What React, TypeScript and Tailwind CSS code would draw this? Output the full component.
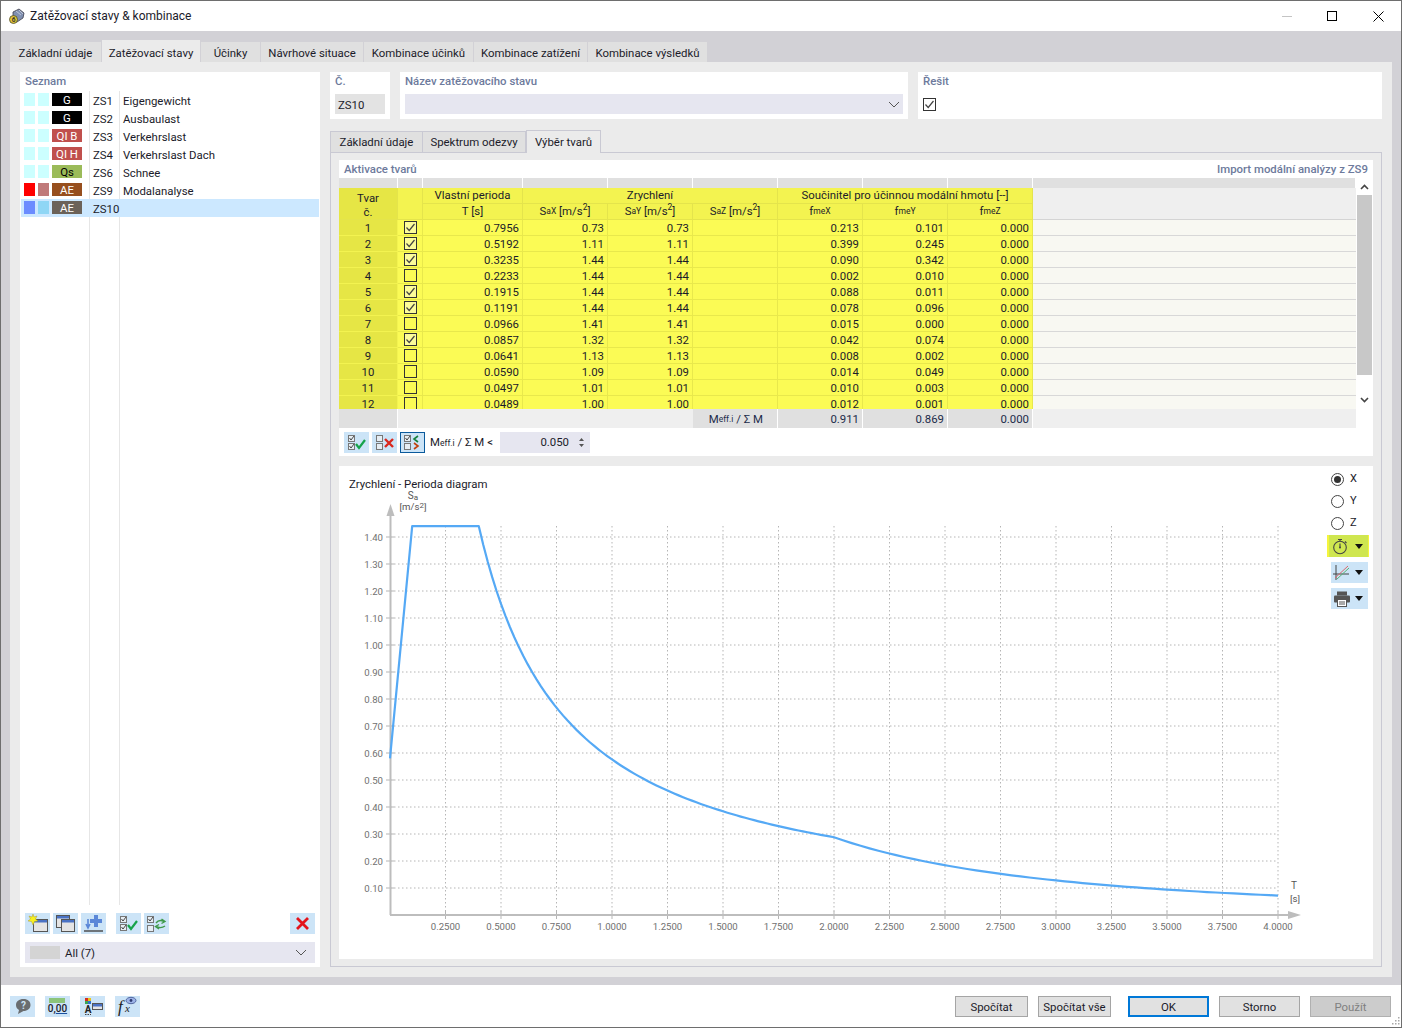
import { ReactNode } from "react";

const loadCases = [
  { a: "bg-[#ccffff]", b: "bg-[#ccffff]", tag: "G", tagCls: "bg-black text-white", no: "ZS1", name: "Eigengewicht" },
  { a: "bg-[#ccffff]", b: "bg-[#ccffff]", tag: "G", tagCls: "bg-black text-white", no: "ZS2", name: "Ausbaulast" },
  { a: "bg-[#ccffff]", b: "bg-[#ccffff]", tag: "QI B", tagCls: "bg-[#c0504d] text-white", no: "ZS3", name: "Verkehrslast" },
  { a: "bg-[#ccffff]", b: "bg-[#ccffff]", tag: "QI H", tagCls: "bg-[#c0504d] text-white", no: "ZS4", name: "Verkehrslast Dach" },
  { a: "bg-[#ccffff]", b: "bg-[#ccffff]", tag: "Qs", tagCls: "bg-[#9bbb59] text-black", no: "ZS6", name: "Schnee" },
  { a: "bg-[#ff0000]", b: "bg-[#c07a7a]", tag: "AE", tagCls: "bg-[#974f1e] text-white", no: "ZS9", name: "Modalanalyse" },
  { a: "bg-[#6b8cff]", b: "bg-[#8fd6f5]", tag: "AE", tagCls: "bg-[#6b6259] text-white", no: "ZS10", name: "" },
];

const rows = [
  [1, true, "0.7956", "0.73", "0.73", "0.213", "0.101", "0.000"],
  [2, true, "0.5192", "1.11", "1.11", "0.399", "0.245", "0.000"],
  [3, true, "0.3235", "1.44", "1.44", "0.090", "0.342", "0.000"],
  [4, false, "0.2233", "1.44", "1.44", "0.002", "0.010", "0.000"],
  [5, true, "0.1915", "1.44", "1.44", "0.088", "0.011", "0.000"],
  [6, true, "0.1191", "1.44", "1.44", "0.078", "0.096", "0.000"],
  [7, false, "0.0966", "1.41", "1.41", "0.015", "0.000", "0.000"],
  [8, true, "0.0857", "1.32", "1.32", "0.042", "0.074", "0.000"],
  [9, false, "0.0641", "1.13", "1.13", "0.008", "0.002", "0.000"],
  [10, false, "0.0590", "1.09", "1.09", "0.014", "0.049", "0.000"],
  [11, false, "0.0497", "1.01", "1.01", "0.010", "0.003", "0.000"],
  [12, false, "0.0489", "1.00", "1.00", "0.012", "0.001", "0.000"],
] as const;

const cols = "grid grid-cols-[59px_25px_100px_85px_85px_85px_85px_85px_85px_323px]";
const labelCls = "text-[11.4px] font-medium text-[#6d7a9c]";
const hBase = "flex items-center justify-center border-r border-b border-[#e4e44c]";
const hCell = `${hBase} bg-[#f3f350] pb-px`;
const dBase = "flex items-center border-r border-b border-[#e8e84c] bg-[#fbfb55]";
const dCell = `${dBase} justify-end pr-[3px]`;
const fCell = "flex items-center justify-end border-r border-white bg-[#e0e0e0] text-[#1c2b4a]";

const Check = ({ on, cls = "" }: { on: boolean; cls?: string }) => (
  <svg width="13" height="13" viewBox="0 0 13 13" className={cls}>
    <rect x="0.5" y="0.5" width="12" height="12" fill="#fff" fillOpacity={on ? 0.4 : 0} stroke="#333" />
    {on && <path d="M2.5 6.5 L5.2 9.5 L10.5 3" fill="none" stroke="#444" strokeWidth="1.2" />}
  </svg>
);

const Chevron = () => (
  <svg width="12" height="7" viewBox="0 0 12 7">
    <path d="M1 1 L6 6 L11 1" fill="none" stroke="#555" strokeWidth="1" />
  </svg>
);

const IconBtn = ({ children, cls = "" }: { children: ReactNode; cls?: string }) => (
  <div className={`flex h-[21px] w-[25px] items-center justify-center bg-[#cce4f7] ${cls}`}>{children}</div>
);

const MiniBox = ({ x, y, on }: { x: number; y: number; on?: boolean }) => (
  <g>
    <rect x={x + 0.5} y={y + 0.5} width="6" height="6" fill="#e6edf3" stroke="#777" />
    {on && <path d={`M${x + 1.5} ${y + 3} l1.5 2 l3 -4`} fill="none" stroke="#333" strokeWidth="0.9" />}
  </g>
);

const IconCheckAll = () => (
  <svg width="20" height="17" viewBox="0 0 20 17">
    <MiniBox x={1} y={1} on />
    <MiniBox x={1} y={9} on />
    <path d="M9 10 L12 14 L18 6" fill="none" stroke="#16a34a" strokeWidth="2.2" />
  </svg>
);
const IconUncheckAll = () => (
  <svg width="20" height="17" viewBox="0 0 20 17">
    <MiniBox x={1} y={1} />
    <MiniBox x={1} y={9} />
    <path d="M10 5 L18 13 M18 5 L10 13" stroke="#d9281e" strokeWidth="2.4" />
  </svg>
);
const IconInvert = () => (
  <svg width="20" height="17" viewBox="0 0 20 17">
    <MiniBox x={1} y={1} on />
    <MiniBox x={1} y={9} />
    <path d="M15 2 L11 5 L15 8" fill="none" stroke="#16803c" strokeWidth="1.6" />
    <path d="M11 9 L15 12 L11 15" fill="none" stroke="#c2410c" strokeWidth="1.6" />
  </svg>
);
const IconSwap = () => (
  <svg width="21" height="18" viewBox="0 0 21 18">
    <MiniBox x={1} y={1} on />
    <MiniBox x={1} y={10} />
    <path d="M10 8 Q13 4 18 6.5 M15.5 4 L19 6.5 L15.5 8.5 M19 11 Q15 14 10 11.5 M13 9.5 L9.5 11.5 L13 14" fill="none" stroke="#3f9a4a" strokeWidth="1.4" />
  </svg>
);
const WinBox = ({ x, y, w = 14, h = 12 }: { x: number; y: number; w?: number; h?: number }) => (
  <g>
    <rect x={x + 0.5} y={y + 0.5} width={w} height={h} fill="#e4e4e4" stroke="#555" />
    <rect x={x + 1} y={y + 1} width={w - 1} height="2.5" fill="#4a72c4" />
  </g>
);

const Tab = ({ label, w, active }: { label: string; w: string; active?: boolean }) => (
  <div
    className={`flex items-center justify-center border-r border-[#d2d1d6] ${w} ${
      active ? "h-[22px] bg-[#ebebeb] pt-[3px]" : "h-[20px] bg-[#e0e0e0] pt-px"
    }`}
  >
    {label}
  </div>
);

const Btn = ({ label, w = "w-[73px]", cls = "" }: { label: string; w?: string; cls?: string }) => (
  <div className={`flex h-[21px] items-center justify-center border pt-px ${w} ${cls}`}>{label}</div>
);

const Sub = ({ children }: { children: ReactNode }) => <span className="text-[8.5px]">{children}</span>;

const xOf = (t: number) => 390 + t * 222;
const yOf = (s: number) => 915 - s * 270;

const curve = () => {
  const pts: string[] = [`${xOf(0)},${yOf(0.58)}`, `${xOf(0.1)},${yOf(1.44)}`, `${xOf(0.4)},${yOf(1.44)}`];
  for (let t = 0.42; t <= 2; t += 0.02) pts.push(`${xOf(t)},${yOf(0.576 / t)}`);
  for (let t = 2; t <= 4.001; t += 0.04) pts.push(`${xOf(t)},${yOf(1.152 / (t * t))}`);
  return pts.join(" ");
};

const Chart = () => {
  const xTicks = Array.from({ length: 16 }, (_, i) => (i + 1) * 0.25);
  const yTicks = Array.from({ length: 14 }, (_, i) => (i + 1) * 0.1);
  return (
    <svg width="985" height="469" viewBox="339 490 985 469" className="block tracking-normal">
      {xTicks.map((t) => (
        <g key={t}>
          <line x1={xOf(t)} x2={xOf(t)} y1="526" y2="915" stroke="#b5b5b5" strokeDasharray="1.5 2.5" />
          <line x1={xOf(t)} x2={xOf(t)} y1="911" y2="919" stroke="#b5b5b5" />
          <text x={xOf(t)} y="930" fontSize="9.6" fill="#707070" textAnchor="middle">
            {t.toFixed(4)}
          </text>
        </g>
      ))}
      {yTicks.map((s) => (
        <g key={s}>
          <line x1="390" x2="1278" y1={yOf(s)} y2={yOf(s)} stroke="#b5b5b5" strokeDasharray="1.5 2.5" />
          <line x1="386" x2="394" y1={yOf(s)} y2={yOf(s)} stroke="#b5b5b5" />
          <text x="383" y={yOf(s) + 3.5} fontSize="9.6" fill="#707070" textAnchor="end">
            {s.toFixed(2)}
          </text>
        </g>
      ))}
      <line x1="390.5" x2="390.5" y1="512" y2="915" stroke="#bdbdbd" strokeWidth="2" />
      <line x1="390" x2="1292" y1="915" y2="915" stroke="#bdbdbd" strokeWidth="2" />
      <path d="M390.5 504 L394.5 516 L386.5 516 Z" fill="#bdbdbd" />
      <path d="M1301 915 L1288 911 L1288 919 Z" fill="#bdbdbd" />
      <polyline points={curve()} fill="none" stroke="#55a9f5" strokeWidth="2.2" strokeLinejoin="round" />
      <text x="413" y="499" fontSize="10" fill="#555" textAnchor="middle">
        S<tspan fontSize="8" dy="1">a</tspan>
      </text>
      <text x="413" y="510" fontSize="9.6" fill="#555" textAnchor="middle">
        [m/s<tspan fontSize="8" dy="-2">2</tspan>
        <tspan dy="2">]</tspan>
      </text>
      <text x="1294" y="889" fontSize="10" fill="#555" textAnchor="middle">T</text>
      <text x="1295" y="902" fontSize="9.6" fill="#555" textAnchor="middle">[s]</text>
    </svg>
  );
};

const Radio = ({ label, on }: { label: string; on?: boolean }) => (
  <div className="flex h-[22px] items-center gap-[6px] pl-[4px]">
    <div className="flex h-[13px] w-[13px] items-center justify-center rounded-full border border-[#444] bg-white">
      {on && <div className="h-[7px] w-[7px] rounded-full bg-[#333]" />}
    </div>
    <span className="text-[11px]">{label}</span>
  </div>
);

const Caret = () => (
  <svg width="8" height="5" viewBox="0 0 8 5">
    <path d="M0 0 L8 0 L4 5 Z" fill="#111" />
  </svg>
);

export default function App() {
  return (
    <div className="flex h-[1028px] w-[1402px] flex-col border border-[#6e6e6e] bg-white text-[11.4px] leading-[16px] text-[#1b1b2a] [font-family:Roboto,sans-serif]">
      {/* title bar */}
      <div className="flex h-[30px] shrink-0 items-center pl-[7px]">
        <svg width="17" height="17" viewBox="0 0 17 17">
          <path d="M5 4 L11 1 L16 5 L15 10 L9 14 L5 11 Z" fill="#7f8fb0" stroke="#3c3c4a" strokeWidth="0.8" />
          <path d="M8 3 L13 7 M11 2 L15 6" stroke="#c4cbdc" strokeWidth="0.9" />
          <circle cx="5.5" cy="11.5" r="4" fill="#e3c534" stroke="#4a4a30" strokeWidth="0.8" />
          <text x="5.5" y="14" fontSize="6.5" fontWeight="700" fill="#333" textAnchor="middle">6</text>
        </svg>
        <span className="ml-[5px] text-[12px]">Zatěžovací stavy &amp; kombinace</span>
        <div className="ml-auto flex items-center">
          <div className="mr-[35px] h-px w-[10px] bg-[#c4c4c4]" />
          <div className="mr-[36px] h-[10px] w-[10px] border border-black" />
          <svg width="11" height="11" viewBox="0 0 11 11" className="mr-[17px]">
            <path d="M0.5 0.5 L10.5 10.5 M10.5 0.5 L0.5 10.5" stroke="#000" />
          </svg>
        </div>
      </div>

      {/* dialog body */}
      <div className="flex h-[954px] shrink-0 flex-col bg-[#d2d1d6] pl-[9px] pt-[9px]">
        <div className="flex h-[22px] items-end">
          <Tab label="Základní údaje" w="w-[92px]" />
          <Tab label="Zatěžovací stavy" w="w-[99px]" active />
          <Tab label="Účinky" w="w-[60px]" />
          <Tab label="Návrhové situace" w="w-[103px]" />
          <Tab label="Kombinace účinků" w="w-[110px]" />
          <Tab label="Kombinace zatížení" w="w-[114px]" />
          <Tab label="Kombinace výsledků" w="w-[120px]" />
        </div>
        <div className="flex h-[915px] w-[1382px] gap-[10px] bg-[#ebebeb] p-[10px]">
          {/* list */}
          <div className="flex h-[895px] w-[300px] shrink-0 flex-col bg-white">
            <div className={`h-[19px] pl-[5px] pt-[1px] ${labelCls}`}>Seznam</div>
            <div className="relative flex h-[822px] flex-col pl-px pr-px">
              <div className="absolute bottom-[8px] left-[69px] top-0 w-px bg-[#e6e6e6]" />
              <div className="absolute bottom-[8px] left-[99px] top-0 w-px bg-[#e6e6e6]" />
              {loadCases.map((c) => (
                <div
                  key={c.no}
                  className={`relative flex h-[18px] items-start pl-[3px] pt-[2px] ${c.no === "ZS10" ? "bg-[#cce8ff]" : ""}`}
                >
                  <div className={`h-[13px] w-[11px] ${c.a}`} />
                  <div className={`ml-[3px] h-[13px] w-[11px] ${c.b}`} />
                  <div className={`ml-[3px] flex h-[13px] w-[30px] items-center justify-center ${c.tagCls}`}>
                    {c.tag}
                  </div>
                  <span className="ml-[11px] w-[30px]">{c.no}</span>
                  <span>{c.name}</span>
                </div>
              ))}
            </div>
            <div className="flex items-center pl-[5px] pr-[5px]">
              <IconBtn>
                <svg width="22" height="19" viewBox="0 0 22 19">
                  <WinBox x={6} y={5} w={14} h={12} />
                  <path d="M6 0 L7 3 L10 2 L8.5 5 L11 7 L7.5 7.5 L6 11 L4.5 7.5 L1 7 L3.5 5 L2 2 L5 3 Z" fill="#f7f020" stroke="#a08a20" strokeWidth="0.4" />
                </svg>
              </IconBtn>
              <IconBtn cls="ml-[3px]">
                <svg width="21" height="19" viewBox="0 0 21 19">
                  <WinBox x={1} y={1} w={13} h={12} />
                  <WinBox x={6} y={5} w={13} h={12} />
                </svg>
              </IconBtn>
              <IconBtn cls="ml-[3px]">
                <svg width="21" height="19" viewBox="0 0 21 19">
                  <path d="M11 1 H15 V5 H19 V9 H15 V13 H11 V9 H7 V5 H11 Z" fill="#5b87d8" />
                  <path d="M5 5 V13 M3 10 L5 14 L7 10" fill="none" stroke="#5b87d8" strokeWidth="1.6" />
                  <line x1="1" x2="20" y1="17" y2="17" stroke="#444" strokeWidth="1.4" />
                </svg>
              </IconBtn>
              <IconBtn cls="ml-[10px]">
                <IconCheckAll />
              </IconBtn>
              <IconBtn cls="ml-[3px]">
                <IconSwap />
              </IconBtn>
              <IconBtn cls="ml-auto">
                <svg width="13" height="13" viewBox="0 0 13 13">
                  <path d="M1 1 L12 12 M12 1 L1 12" stroke="#e3141c" strokeWidth="2.8" />
                </svg>
              </IconBtn>
            </div>
            <div className="mx-[5px] mt-[8px] flex h-[21px] items-center bg-[#e6e6f0] pl-[5px] pr-[8px]">
              <div className="h-[13px] w-[30px] bg-[#d4d4d4]" />
              <span className="ml-[5px] pt-px">All (7)</span>
              <div className="ml-auto">
                <Chevron />
              </div>
            </div>
          </div>

          {/* detail */}
          <div className="flex w-[1052px] flex-col">
            <div className="flex h-[47px] gap-[10px]">
              <div className="flex w-[60px] flex-col bg-white px-[5px]">
                <div className={`h-[22px] pt-[1px] ${labelCls}`}>Č.</div>
                <div className="flex h-[20px] items-center bg-[#e3e3e3] pl-[3px] pt-[2px]">ZS10</div>
              </div>
              <div className="flex w-[508px] flex-col bg-white px-[5px]">
                <div className={`h-[22px] pt-[1px] ${labelCls}`}>Název zatěžovacího stavu</div>
                <div className="flex h-[20px] items-center justify-end bg-[#e6e6f0] pr-[3px]">
                  <Chevron />
                </div>
              </div>
              <div className="flex w-[464px] flex-col bg-white px-[5px]">
                <div className={`h-[26px] pt-[1px] ${labelCls}`}>Řešit</div>
                <Check on />
              </div>
            </div>

            <div className="mt-[11px] flex h-[22px] items-end">
              <div className="flex h-[21px] w-[93px] items-center justify-center border border-b-0 border-[#c9c9d3] bg-[#e0e0e0]">
                Základní údaje
              </div>
              <div className="flex h-[21px] w-[103px] items-center justify-center border-r border-t border-[#c9c9d3] bg-[#e0e0e0]">
                Spektrum odezvy
              </div>
              <div className="z-10 -mb-px flex h-[23px] w-[75px] items-center justify-center border border-b-0 border-[#c9c9d3] bg-[#ebebeb]">
                Výběr tvarů
              </div>
            </div>

            <div className="flex h-[815px] flex-col border border-[#c9c9d3] px-[8px] pt-[7px]">
              {/* shapes table */}
              <div className="flex h-[296px] flex-col bg-white">
                <div className={`flex h-[18px] items-center justify-between pl-[5px] pr-[5px] ${labelCls}`}>
                  <span>Aktivace tvarů</span>
                  <span>Import modální analýzy z ZS9</span>
                </div>
                <div className="flex h-[231px]">
                  <div className="h-[231px] w-[1017px] overflow-hidden">
                    <div className={`${cols} h-[10px]`}>
                      {Array.from({ length: 10 }).map((_, i) => (
                        <div key={i} className="border-r border-white bg-[#e0e0e0]" />
                      ))}
                    </div>
                    <div className={`${cols} grid-rows-[16px_16px]`}>
                      <div className={`${hBase} row-span-2 flex-col bg-[#e6e645] pt-[3px] leading-[14px]`}>
                        <span>Tvar</span>
                        <span>č.</span>
                      </div>
                      <div className={`${hCell} row-span-2`} />
                      <div className={hCell}>Vlastní perioda</div>
                      <div className={`${hCell} col-span-3`}>Zrychlení</div>
                      <div className={`${hCell} col-span-3`}>Součinitel pro účinnou modální hmotu [--]</div>
                      <div className="row-span-2 border-b border-[#d4d4d4] bg-[#efefef]" />
                      <div className={hCell}>T [s]</div>
                      <div className={hCell}>S<Sub>aX</Sub>&nbsp;[m/s<sup className="text-[8.5px]">2</sup>]</div>
                      <div className={hCell}>S<Sub>aY</Sub>&nbsp;[m/s<sup className="text-[8.5px]">2</sup>]</div>
                      <div className={hCell}>S<Sub>aZ</Sub>&nbsp;[m/s<sup className="text-[8.5px]">2</sup>]</div>
                      <div className={hCell}>f<Sub>meX</Sub></div>
                      <div className={hCell}>f<Sub>meY</Sub></div>
                      <div className={hCell}>f<Sub>meZ</Sub></div>
                    </div>
                    {rows.map((r) => (
                      <div key={r[0]} className={`${cols} grid-rows-[16px]`}>
                        <div className="flex items-center justify-center border-r border-b border-[#f3f350] bg-[#e6e645]">
                          {r[0]}
                        </div>
                        <div className={`${dBase} justify-center`}>
                          <Check on={r[1]} />
                        </div>
                        <div className={dCell}>{r[2]}</div>
                        <div className={dCell}>{r[3]}</div>
                        <div className={dCell}>{r[4]}</div>
                        <div className={dCell} />
                        <div className={dCell}>{r[5]}</div>
                        <div className={dCell}>{r[6]}</div>
                        <div className={dCell}>{r[7]}</div>
                        <div className="border-b border-[#d8d8d8] bg-[#f8f8f2]" />
                      </div>
                    ))}
                  </div>
                  <div className="flex w-[17px] flex-col items-center bg-white pt-[6px]">
                    <svg width="9" height="6" viewBox="0 0 9 6">
                      <path d="M1 5 L4.5 1.5 L8 5" fill="none" stroke="#444" strokeWidth="1.6" />
                    </svg>
                    <div className="mt-[5px] h-[180px] w-[15px] bg-[#c8c8c8]" />
                    <svg width="9" height="6" viewBox="0 0 9 6" className="mt-[22px]">
                      <path d="M1 1 L4.5 4.5 L8 1" fill="none" stroke="#444" strokeWidth="1.6" />
                    </svg>
                  </div>
                </div>
                <div className={`${cols} h-[19px]`}>
                  <div className="border-r border-white bg-[#e0e0e0]" />
                  <div className="col-span-4 bg-[#efefef]" />
                  <div className={`${fCell} pr-[14px]`}>
                    M<Sub>eff.i</Sub>&nbsp;/ Σ M
                  </div>
                  <div className={`${fCell} pr-[3px]`}>0.911</div>
                  <div className={`${fCell} pr-[3px]`}>0.869</div>
                  <div className={`${fCell} pr-[3px]`}>0.000</div>
                  <div className="bg-[#efefef]" />
                </div>
                <div className="flex h-[28px] items-center pl-[5px]">
                  <IconBtn>
                    <IconCheckAll />
                  </IconBtn>
                  <IconBtn cls="ml-[3px]">
                    <IconUncheckAll />
                  </IconBtn>
                  <IconBtn cls="ml-[3px] border border-[#0a5a9c]">
                    <IconInvert />
                  </IconBtn>
                  <span className="ml-[5px] w-[70px]">
                    M<Sub>eff.i</Sub>&nbsp;/ Σ M &lt;
                  </span>
                  <div className="flex h-[21px] w-[90px] items-center justify-end bg-[#e6e6f0] pr-[5px]">
                    0.050
                    <svg width="7" height="11" viewBox="0 0 7 11" className="ml-[9px]">
                      <path d="M3.5 1 L6 4 L1 4 Z M3.5 10 L6 7 L1 7 Z" fill="#555" />
                    </svg>
                  </div>
                </div>
              </div>

              {/* diagram */}
              <div className="mt-[10px] flex h-[493px] bg-white">
                <div className="flex w-[985px] flex-col">
                  <div className="h-[24px] pl-[10px] pt-[12px] leading-[12px]">Zrychlení - Perioda diagram</div>
                  <Chart />
                </div>
                <div className="flex flex-1 flex-col pl-[3px] pt-[2px]">
                  <Radio label="X" on />
                  <Radio label="Y" />
                  <Radio label="Z" />
                  <div className="mt-px flex h-[22px] w-[42px] items-center justify-between border-l-2 border-r border-[#f5f53c] bg-[#cfe650] pl-[3px] pr-[5px]">
                    <svg width="16" height="17" viewBox="0 0 16 17">
                      <circle cx="8" cy="9.5" r="6.3" fill="none" stroke="#444" strokeWidth="1.1" />
                      <path d="M6 1.5 H10 M8 1.5 V3.2 M8 9.5 V5.5 M13 3.5 L14.5 5" fill="none" stroke="#444" strokeWidth="1.1" />
                      <circle cx="8" cy="9.5" r="1" fill="#444" />
                    </svg>
                    <Caret />
                  </div>
                  <div className="ml-[4px] mt-[5px] flex h-[21px] w-[37px] items-center justify-between bg-[#cce4f7] pl-[2px] pr-[5px]">
                    <svg width="17" height="17" viewBox="0 0 17 17">
                      <path d="M3 1 V16 M0 10 H16" stroke="#444" strokeWidth="1" />
                      <path d="M2 14 L15 2" stroke="#d96a6a" strokeWidth="1" />
                      <path d="M4 15 L16 4" stroke="#5bb275" strokeWidth="1" />
                    </svg>
                    <Caret />
                  </div>
                  <div className="ml-[4px] mt-[5px] flex h-[21px] w-[37px] items-center justify-between bg-[#cce4f7] pl-[2px] pr-[5px]">
                    <svg width="17" height="16" viewBox="0 0 17 16">
                      <rect x="4" y="0.5" width="10" height="4" fill="#555" />
                      <rect x="1" y="4.5" width="16" height="7" rx="1" fill="#555" />
                      <rect x="4.5" y="8.5" width="9" height="7" fill="#fff" stroke="#555" />
                      <path d="M6 11 H12 M6 13 H12" stroke="#555" />
                    </svg>
                    <Caret />
                  </div>
                </div>
              </div>
            </div>
          </div>
        </div>
      </div>

      {/* footer */}
      <div className="relative flex flex-1 items-center pl-[9px]">
        <IconBtn>
          <svg width="18" height="17" viewBox="0 0 18 17">
            <path d="M9.5 1 C14 1 16.5 3.5 16.5 7 C16.5 10.5 13.5 13 9.5 13 L4 16 L5 12 C3 11 2 9.2 2 7 C2 3.5 5 1 9.5 1 Z" fill="#6a6d70" />
            <text x="9.5" y="11" fontSize="10" fontWeight="700" fill="#cce4f7" textAnchor="middle">?</text>
          </svg>
        </IconBtn>
        <IconBtn cls="ml-[10px]">
          <div className="flex flex-col items-center leading-none">
            <div className="mb-[1px] h-[5px] w-[16px] bg-[#8cc47a]" />
            <span className="text-[10px] font-medium leading-[10px]">
              0,<span className="underline decoration-[#1a4fa0]">00</span>
            </span>
          </div>
        </IconBtn>
        <IconBtn cls="ml-[10px]">
          <svg width="21" height="19" viewBox="0 0 21 19">
            <rect x="3" y="1" width="3" height="3" fill="#d62d20" />
            <rect x="6" y="1" width="3" height="3" fill="#e7c51c" />
            <rect x="3" y="4" width="3" height="3" fill="#3aa655" />
            <rect x="6" y="4" width="3" height="3" fill="#2f6fd0" />
            <WinBox x={10} y={6} w={10} h={6} />
            <text x="6" y="15.5" fontSize="10" fontWeight="700" fill="#222" textAnchor="middle">A</text>
            <path d="M3 17.5 H9" stroke="#444" strokeDasharray="1.5 1" />
          </svg>
        </IconBtn>
        <IconBtn cls="ml-[10px]">
          <svg width="21" height="20" viewBox="0 0 21 20">
            <text x="1" y="16" fontSize="17" fontStyle="italic" fontFamily="Liberation Serif" fill="#222">f</text>
            <text x="8" y="16" fontSize="11" fontStyle="italic" fontFamily="Liberation Serif" fill="#222">x</text>
            <ellipse cx="14" cy="4.5" rx="5" ry="3.2" fill="#9db4e8" stroke="#3b4f8c" strokeWidth="0.8" />
            <circle cx="14" cy="4.5" r="1.4" fill="#2c3a70" />
          </svg>
        </IconBtn>
        <div className="ml-auto flex items-center pr-[10px]">
          <Btn label="Spočítat" cls="border-[#a5a5a5] bg-[#e1e1e1]" />
          <Btn label="Spočítat vše" cls="ml-[10px] border-[#a5a5a5] bg-[#e1e1e1]" />
          <Btn label="OK" w="w-[81px]" cls="ml-[17px] border-2 border-[#0078d7] bg-[#e1e1e1]" />
          <Btn label="Storno" w="w-[81px]" cls="ml-[10px] border-[#a5a5a5] bg-[#e1e1e1]" />
          <Btn label="Použít" w="w-[81px]" cls="ml-[10px] border-[#b0b0b0] bg-[#cccccc] text-[#808080]" />
        </div>
        <svg width="10" height="10" viewBox="0 0 10 10" className="absolute bottom-[1px] right-[1px]">
          <path d="M8 1 h1.5 v1.5 h-1.5 Z M5 4 h1.5 v1.5 h-1.5 Z M8 4 h1.5 v1.5 h-1.5 Z M2 7 h1.5 v1.5 h-1.5 Z M5 7 h1.5 v1.5 h-1.5 Z M8 7 h1.5 v1.5 h-1.5 Z" fill="#a8a8a8" />
        </svg>
      </div>
    </div>
  );
}
